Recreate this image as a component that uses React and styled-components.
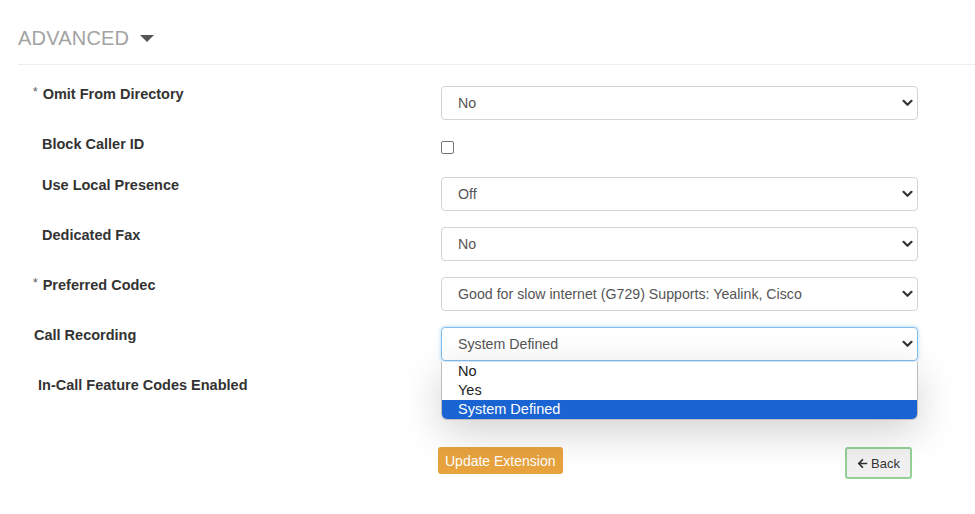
import React from 'react';
import styled, { createGlobalStyle } from 'styled-components';
import { FaArrowLeft } from 'react-icons/fa';

const rows = [
    { label: 'Omit From Directory', required: true, indent: 33, kind: 'select', value: 'No' },
    { label: 'Block Caller ID', indent: 42, kind: 'checkbox' },
    { label: 'Use Local Presence', indent: 42, kind: 'select', value: 'Off' },
    { label: 'Dedicated Fax', indent: 42, kind: 'select', value: 'No' },
    { label: 'Preferred Codec', required: true, indent: 33, kind: 'select', value: 'Good for slow internet (G729) Supports: Yealink, Cisco' },
    { label: 'Call Recording', indent: 34, kind: 'select', value: 'System Defined', open: true, options: ['No', 'Yes', 'System Defined'] },
    { label: 'In-Call Feature Codes Enabled', indent: 38, kind: 'none' },
]

const Chevron = () => (
    <svg width="11" height="8" viewBox="0 0 11 8">
        <path d="M1.5 1.8 L5.5 5.8 L9.5 1.8" fill="none" stroke="#333" strokeWidth="2.2" strokeLinecap="round" strokeLinejoin="round" />
    </svg>
)

const App = () => (
    <>
        <GlobalStyle />
        <Page>
            <Header>
                <Title>ADVANCED</Title>
                <Caret />
            </Header>
            <Form>
                {rows.map((row, i) =>
                    <Row key={row.label} tall={row.kind !== 'checkbox'}>
                        <Label indent={row.indent}>
                            {row.required && <Req>*</Req>}
                            {row.label}
                        </Label>
                        <Control>
                            {row.kind === 'select' &&
                                <SelectBox focused={row.open}>
                                    <span>{row.value}</span>
                                    <Chevron />
                                </SelectBox>}
                            {row.kind === 'checkbox' && <Check />}
                            {row.open &&
                                <Menu>
                                    {row.options.map(opt =>
                                        <Option key={opt} selected={opt === row.value}>{opt}</Option>
                                    )}
                                </Menu>}
                        </Control>
                    </Row>
                )}
            </Form>
            <Actions>
                <UpdateButton>Update Extension</UpdateButton>
                <BackButton><FaArrowLeft size={11} /> Back</BackButton>
            </Actions>
        </Page>
    </>
)

export default App;

// CSS
const GlobalStyle = createGlobalStyle`
body {
    margin: 0;
    background: #fff;
    font-family: "Liberation Sans", Arial, sans-serif;
}
`

const Page = styled.div`
width: 975px;
height: 514px;
padding-left: 18px;
box-sizing: border-box;
overflow: hidden;
`

const Header = styled.div`
height: 65px;
display: flex;
align-items: flex-start;
padding-top: 27px;
box-sizing: border-box;
border-bottom: 1px solid #ececec;
`

const Title = styled.div`
font-size: 20px;
line-height: 23px;
color: #a3a3a3;
letter-spacing: 0.2px;
`

const Caret = styled.div`
width: 0;
height: 0;
margin: 8px 0 0 11px;
border-left: 7px solid transparent;
border-right: 7px solid transparent;
border-top: 7px solid #555;
`

const Form = styled.div`
display: flex;
flex-direction: column;
padding-top: 21px;
`

const Row = styled.div`
display: grid;
grid-template-columns: 423px 477px;
height: ${p => p.tall ? '50px' : '41px'};
`

const Label = styled.div`
padding-left: ${p => p.indent - 18}px;
font-size: 14.5px;
line-height: 17px;
font-weight: bold;
color: #333;
display: flex;
`

const Req = styled.span`
font-size: 12px;
line-height: 12px;
margin-right: 5px;
font-weight: normal;
color: #555;
`

const Control = styled.div`
position: relative;
`

const SelectBox = styled.div`
height: 34px;
box-sizing: border-box;
display: flex;
align-items: center;
justify-content: space-between;
padding: 0 4px 0 16px;
border: 1px solid ${p => p.focused ? '#7fbef0' : '#d4d4d4'};
border-radius: 4px;
box-shadow: ${p => p.focused ? '0 0 4px rgba(102,175,233,.5)' : 'none'};
font-size: 14.2px;
color: #555;
background: #fff;
`

const Check = styled.div`
width: 11px;
height: 11px;
margin: 5px 0 0 0;
border: 1px solid #767676;
border-radius: 2px;
background: #fff;
`

const Menu = styled.div`
position: absolute;
top: 35px;
left: 0;
width: 477px;
box-sizing: border-box;
background: #fff;
border: 1px solid #bdbdbd;
border-top: none;
border-radius: 0 0 6px 6px;
overflow: hidden;
box-shadow: 0 12px 40px rgba(0,0,0,.18);
z-index: 2;
`

const Option = styled.div`
height: 19px;
line-height: 19px;
padding-left: 16px;
font-size: 14.5px;
color: ${p => p.selected ? '#fff' : '#222'};
background: ${p => p.selected ? '#1a63d2' : '#fff'};
`

const Actions = styled.div`
display: flex;
align-items: flex-start;
justify-content: space-between;
width: 894px;
padding: 20px 0 0 420px;
box-sizing: border-box;
`

const UpdateButton = styled.button`
height: 27px;
padding: 0 7px;
border: none;
border-radius: 3px;
background: #e8a33e;
color: #fff;
font-family: "Liberation Sans", Arial, sans-serif;
font-size: 14px;
`

const BackButton = styled.button`
height: 32px;
width: 67px;
display: flex;
align-items: center;
justify-content: center;
gap: 3px;
border: 2px solid #95d197;
border-radius: 3px;
background: #f1f1f1;
color: #333;
font-family: "Liberation Sans", Arial, sans-serif;
font-size: 13px;
`
